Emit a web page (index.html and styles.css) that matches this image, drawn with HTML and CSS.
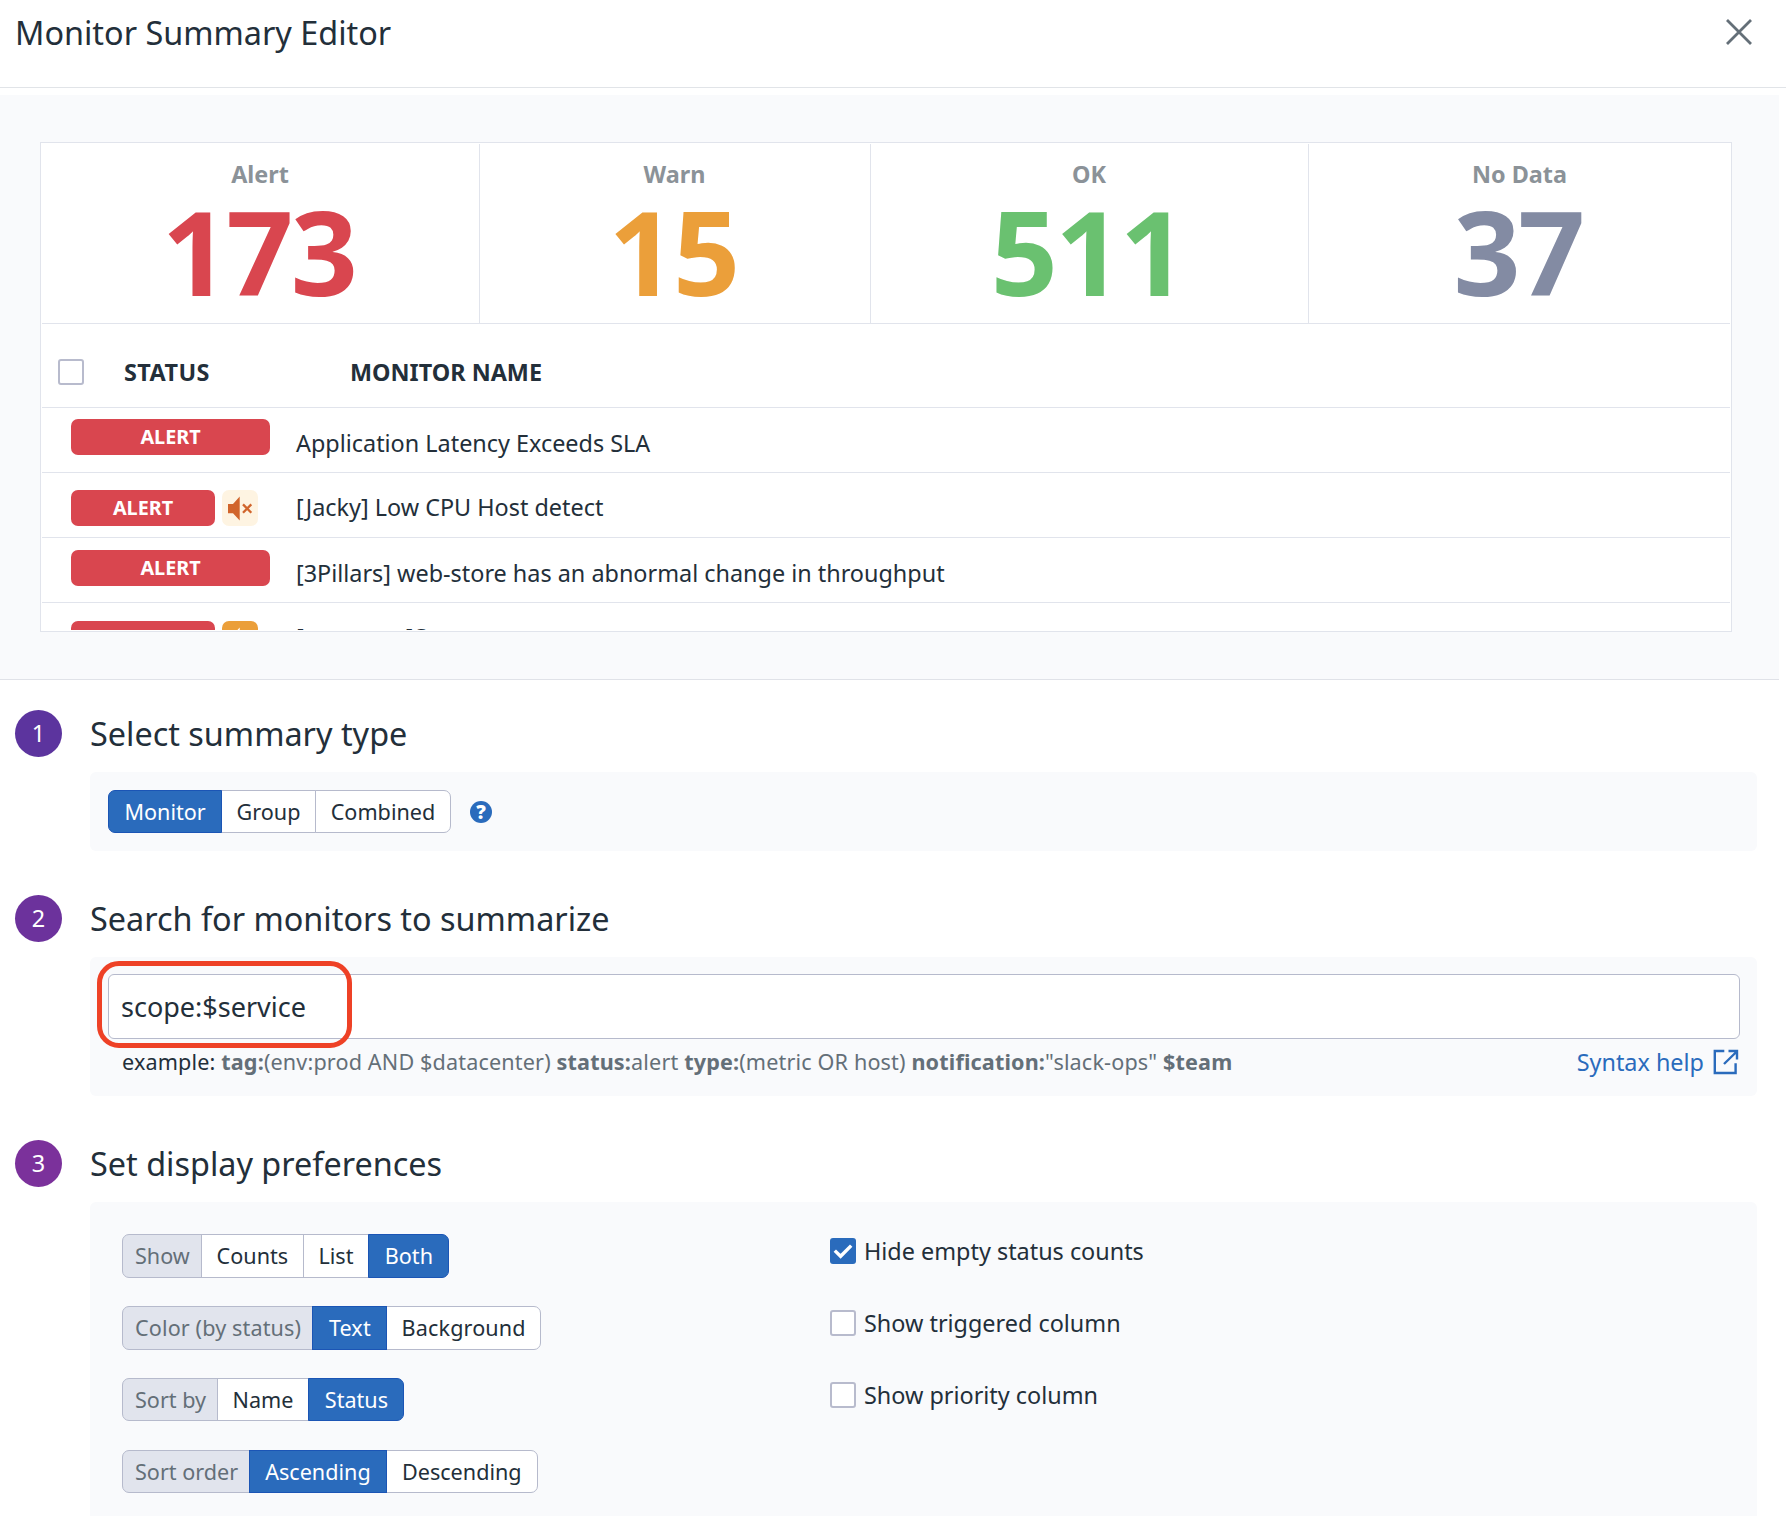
FILE: index.html
```html
<!DOCTYPE html>
<html lang="en">
<head>
<meta charset="utf-8">
<title>Monitor Summary Editor</title>
<link rel="stylesheet" href="styles.css">
</head>
<body>
<header class="header">
  <h1 class="title">Monitor Summary Editor</h1>
  <svg class="close" width="26" height="28" viewBox="0 0 26 28"><path d="M1 2L25 26M25 2L1 26" stroke="#646f78" stroke-width="2.8" fill="none"/></svg>
</header>

<section class="preview">
  <div class="card">
    <div class="counts">
      <div class="count alert"><span class="count-label">Alert</span><span class="count-value">173</span></div>
      <div class="count warn"><span class="count-label">Warn</span><span class="count-value">15</span></div>
      <div class="count ok"><span class="count-label">OK</span><span class="count-value">511</span></div>
      <div class="count nodata"><span class="count-label">No Data</span><span class="count-value">37</span></div>
    </div>
    <div class="list-head">
      <span class="checkbox"></span>
      <span class="col-status">Status</span>
      <span class="col-name">Monitor Name</span>
    </div>
    <div class="row">
      <div class="status"><span class="pill">ALERT</span></div>
      <span class="name">Application Latency Exceeds SLA</span>
    </div>
    <div class="row muted">
      <div class="status"><span class="pill">ALERT</span><span class="mute"><svg width="36" height="36" viewBox="0 0 36 36"><path d="M6 14H11L17.7 6.5V30.5L11 23.3H6Z" fill="currentColor"/><path d="M21 14.4L29.3 22.7M29.3 14.4L21 22.7" stroke="currentColor" stroke-width="2.3"/></svg></span></div>
      <span class="name">[Jacky] Low CPU Host detect</span>
    </div>
    <div class="row third">
      <div class="status"><span class="pill">ALERT</span></div>
      <span class="name">[3Pillars] web-store has an abnormal change in throughput</span>
    </div>
    <div class="row muted last">
      <div class="status"><span class="pill">ALERT</span><span class="mute solid"><svg width="36" height="36" viewBox="0 0 36 36"><path d="M6 14H11L17.7 6.5V30.5L11 23.3H6Z" fill="currentColor"/><path d="M21 14.4L29.3 22.7M29.3 14.4L21 22.7" stroke="currentColor" stroke-width="2.3"/></svg></span></div>
      <span class="name">[payment]S</span>
    </div>
  </div>
</section>

<main class="steps">
  <section class="step">
    <div class="step-head"><span class="num n1">1</span><h2 class="heading">Select summary type</h2></div>
    <div class="panel type-panel">
      <div class="seg"><span class="opt on">Monitor</span><span class="opt">Group</span><span class="opt wide">Combined</span></div>
      <span class="help">?</span>
    </div>
  </section>

  <section class="step">
    <div class="step-head"><span class="num n2">2</span><h2 class="heading">Search for monitors to summarize</h2></div>
    <div class="panel search-panel">
      <div class="search">scope:$service<span class="highlight"></span></div>
      <div class="hint">
        <span class="example"><span class="lead">example:</span> <b>tag:</b>(env:prod AND $datacenter) <b>status:</b>alert <b>type:</b>(metric OR host) <b>notification:</b>"slack-ops" <b>$team</b></span>
        <a class="syntax">Syntax help<svg width="26" height="26" viewBox="0 0 26 26" fill="none" stroke="currentColor" stroke-width="2.4"><path d="M11.3 2H1.8V24H22.6V14.2M15.5 2H24V10.5M23.8 2.5L11 15"/></svg></a>
      </div>
    </div>
  </section>

  <section class="step">
    <div class="step-head"><span class="num n3">3</span><h2 class="heading">Set display preferences</h2></div>
    <div class="panel prefs">
      <div class="pref-col">
        <div class="seg tall"><span class="opt label">Show</span><span class="opt">Counts</span><span class="opt wide">List</span><span class="opt on">Both</span></div>
        <div class="seg tall loose"><span class="opt label">Color (by status)</span><span class="opt on">Text</span><span class="opt">Background</span></div>
        <div class="seg"><span class="opt label tight">Sort by</span><span class="opt wide">Name</span><span class="opt on">Status</span></div>
        <div class="seg"><span class="opt label tight">Sort order</span><span class="opt on">Ascending</span><span class="opt wide">Descending</span></div>
      </div>
      <div class="check-col">
        <div class="check"><span class="checkbox checked"><svg width="26" height="26" viewBox="0 0 26 26"><path d="M4.8 12.6L10.6 18.3L21.2 7.6" fill="none" stroke="#fff" stroke-width="3.4"/></svg></span>Hide empty status counts</div>
        <div class="check"><span class="checkbox"></span>Show triggered column</div>
        <div class="check"><span class="checkbox"></span>Show priority column</div>
      </div>
    </div>
  </section>
</main>
</body>
</html>
```
FILE: styles.css
```css
* { box-sizing: border-box; }
body {
  margin: 0;
  height: 1516px;
  overflow: hidden;
  background: #fff;
  color: #232f3a;
  font-family: "Noto Sans", "Open Sans", sans-serif;
  font-size: 23.4px;
  white-space: nowrap;
}
h1, h2 { margin: 0; font-weight: 400; font-size: 32.4px; }

.header {
  height: 88px;
  padding: 0 34px 23px 15px;
  border-bottom: 1px solid #e1e4e8;
  display: flex;
  align-items: center;
  justify-content: space-between;
}
.title { line-height: 44px; }

.preview {
  width: 1779px;
  height: 585px;
  margin-top: 7px;
  padding: 47px 47px 47px 40px;
  background: #f9fafc;
  border-bottom: 1px solid #e0e2e8;
}
.card {
  height: 490px;
  padding: 1px;
  background: #fff;
  border: 1px solid #e1e4ec;
  overflow: hidden;
  overflow: clip;
  overflow-clip-margin: content-box;
}
.counts {
  height: 180px;
  display: grid;
  grid-template-columns: 438px 391px 438px 1fr;
  border-bottom: 1px solid #e1e4ec;
}
.count {
  display: flex;
  flex-direction: column;
  align-items: center;
  padding: 14px 1px 0 0;
  border-right: 1px solid #e1e4ec;
}
.count:last-child { padding-right: 0; border-right: 0; }
.count-label { color: #8b9298; font-weight: 700; line-height: 32px; }
.count-value {
  margin-right: 3px;
  font-size: 117.4px;
  font-weight: 700;
  line-height: 120px;
  letter-spacing: -2.7px;
}
.alert .count-value { color: #d9464f; }
.warn .count-value { color: #eb9f3a; }
.ok .count-value { color: #6ac170; }
.nodata .count-value { color: #838ba3; }

.list-head {
  height: 84px;
  padding: 12px 0 0 16px;
  display: flex;
  align-items: center;
  border-bottom: 1px solid #e1e4ec;
  font-weight: 700;
  text-transform: uppercase;
}
.checkbox {
  flex: none;
  width: 26px;
  height: 26px;
  background: #fff;
  border: 2px solid #b8bbcd;
  border-radius: 3px;
}
.col-status { width: 226px; margin-left: 40px; letter-spacing: 0.4px; }

.row {
  height: 65px;
  padding: 11px 0 0 29px;
  display: flex;
  align-items: flex-start;
  border-bottom: 1px solid #e1e4ec;
}
.row.muted { padding-top: 17px; }
.row.third { padding-top: 12px; }
.row.last { padding-top: 18px; }
.status { width: 225px; display: flex; gap: 7px; }
.pill {
  width: 199px;
  height: 36px;
  border-radius: 7px;
  background: #d9464f;
  color: #fff;
  font-size: 19.8px;
  font-weight: 700;
  line-height: 35px;
  text-align: center;
}
.muted .pill { width: 144px; }
.mute { width: 36px; height: 36px; border-radius: 7px; background: #fef4e2; color: #d1652c; }
.mute svg { display: block; }
.mute.solid { background: #eb9f3a; color: #fff; }
.name { line-height: 36px; padding-top: 6px; }
.muted .name { padding-top: 0; line-height: 34px; }
.third .name { padding-top: 5px; }
.last .name { line-height: 32px; letter-spacing: 0.6px; }

.steps { padding: 30px 29px 0 15px; }
.step { margin-bottom: 44px; }
.step-head { height: 47px; display: flex; align-items: center; gap: 28px; }
.num {
  width: 47px;
  height: 47px;
  border-radius: 50%;
  color: #fff;
  text-align: center;
  line-height: 46px;
}
.n1 { background: #5c349e; }
.n2 { background: #6c329c; }
.n3 { background: #7b319b; }
.heading { line-height: 46px; padding-bottom: 2px; }
.panel { margin: 15px 0 0 75px; background: #f9fafc; border-radius: 6px; }

.seg { display: flex; width: max-content; font-size: 21.6px; }
.opt {
  height: 43px;
  padding: 0 14.4px;
  line-height: 41px;
  background: #fff;
  border: 1px solid #b6bacc;
}
.tall .opt { height: 44px; line-height: 42px; }
.loose { letter-spacing: 0.12px; }
.opt + .opt { margin-left: -1px; }
.opt:first-child { border-radius: 7px 0 0 7px; }
.opt:last-child { border-radius: 0 7px 7px 0; }
.opt.on { padding: 0 15.4px; background: #2a6bbc; border-color: #1b55b5; color: #fff; position: relative; }
.opt.wide { padding: 0 14.9px; }
.opt.label { padding: 0 11.4px 0 12px; background: #e1e4ed; color: #646f78; }
.opt.label.tight { padding-right: 10.6px; }

.type-panel { height: 79px; padding: 0 18px; display: flex; align-items: center; gap: 19px; }
.help {
  width: 22px;
  height: 22px;
  border-radius: 50%;
  background: #2a6bbc;
  color: #fff;
  font-size: 19px;
  font-weight: 900;
  line-height: 22px;
  text-align: center;
}

.search-panel { height: 139px; padding: 17px 17px 0 18px; }
.search {
  position: relative;
  height: 65px;
  padding-left: 12px;
  background: #fff;
  border: 1px solid #b6bacc;
  border-radius: 6px;
  font-size: 27px;
  line-height: 64px;
}
.highlight {
  position: absolute;
  left: -12px;
  top: -14px;
  width: 255px;
  height: 87px;
  border: 5px solid #ee4126;
  border-radius: 22px;
}
.hint { display: flex; justify-content: space-between; padding: 6px 1px 0 14px; line-height: 34px; }
.example { font-size: 21.6px; letter-spacing: 0.15px; color: #646f78; }
.lead { color: #232f3a; }
.syntax { display: flex; align-items: center; gap: 9px; color: #2a6bbc; }

.prefs { height: 340px; padding: 32px; display: flex; }
.pref-col { width: 707.5px; display: grid; grid-auto-rows: 72px; align-content: start; }
.check-col { display: flex; flex-direction: column; gap: 38px; }
.check { height: 34px; display: flex; align-items: center; gap: 8.5px; line-height: 34px; }
.checked { background: #2a6bbc; border: 0; }
.checked svg { display: block; }
```
